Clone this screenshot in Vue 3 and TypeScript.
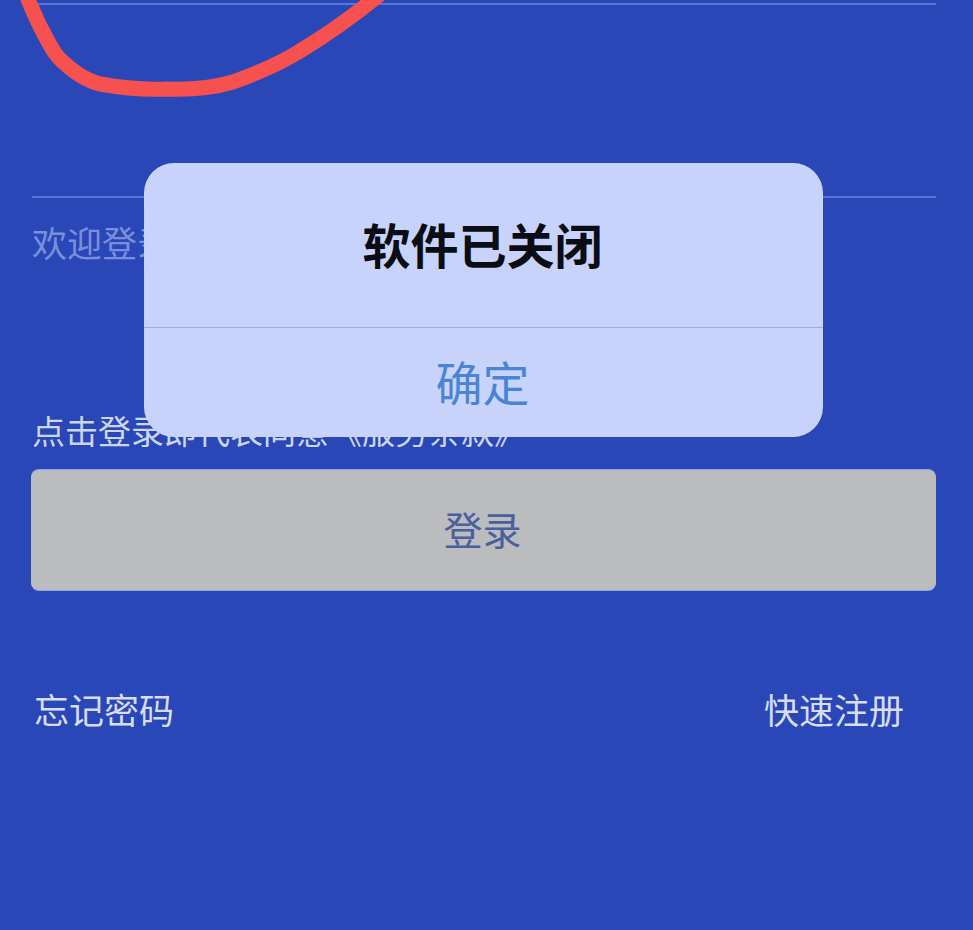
<script setup lang="ts">
const title = '软件已关闭'
</script>

<template>
  <div class="page">
    <div class="rule rule-top"></div>
    <div class="rule rule-mid"></div>
    <div class="welcome">欢迎登录</div>
    <div class="terms">点击登录即代表同意《服务条款》</div>
    <button class="login">登录</button>
    <div class="links">
      <span>忘记密码</span>
      <span>快速注册</span>
    </div>

    <svg class="scribble" width="400" height="110" viewBox="0 0 400 110" fill="none">
      <path d="M26 -6C32 10 42 31 50 45C56 56 60 59.5 70 68C79 75.5 90 81.5 100 84C122 88 145 90 167 89C189 90 212 88 233 82C255 74 278 65 300 51C325 36 352 17 378 -4" stroke="#f7514f" stroke-width="15" stroke-linecap="round" />
    </svg>

    <div class="dialog">
      <div class="dialog-title">{{ title }}</div>
      <div class="dialog-action">确定</div>
    </div>
  </div>
</template>

<style>
html, body { margin: 0; padding: 0; background: #2a47b8; }
</style>

<style scoped>
.page {
  position: relative;
  width: 973px;
  height: 930px;
  overflow: hidden;
  background: #2a47b8;
  box-sizing: border-box;
  padding: 3px 37px 0 32px;
  font-family: "Noto Sans CJK SC", "Liberation Sans", sans-serif;
  display: flex;
  flex-direction: column;
}
.rule { height: 2px; background: #5a74d6; }
.rule-mid { margin-top: 191px; }
.welcome {
  margin-top: 20px;
  font-size: 35px;
  line-height: 48px;
  color: #7a8fdc;
}
.terms {
  margin-top: 142px;
  font-size: 33px;
  line-height: 44px;
  color: #ccd5f0;
  white-space: nowrap;
}
.login {
  margin: 18px 0 0 -1px;
  height: 120px;
  padding: 0 2px 4px 0;
  border: 0;
  border-radius: 8px;
  background: #bbbcbe;
  box-shadow: 0 1px 0 #8ea3e6, 0 -1px 0 #8ea3e6;
  color: #4a5f9f;
  font-family: inherit;
  font-size: 39px;
}
.links {
  margin-top: 95px;
  padding: 0 32px 0 2px;
  display: flex;
  justify-content: space-between;
  font-size: 35px;
  line-height: 48px;
  color: #d6dcf2;
}
.scribble { position: absolute; left: 0; top: 0; }
.dialog {
  position: absolute;
  left: 144px;
  top: 163px;
  width: 679px;
  height: 274px;
  border-radius: 30px;
  background: #c7d3fb;
  display: flex;
  flex-direction: column;
  text-align: center;
}
.dialog-title {
  height: 165px;
  padding-right: 2px;
  box-sizing: border-box;
  border-bottom: 1px solid #a3add2;
  font-size: 48px;
  font-weight: 700;
  line-height: 160px;
  color: #0b0d14;
}
.dialog-action {
  flex: 1;
  padding-right: 2px;
  font-size: 47px;
  line-height: 105px;
  color: #4a84d4;
}
</style>
